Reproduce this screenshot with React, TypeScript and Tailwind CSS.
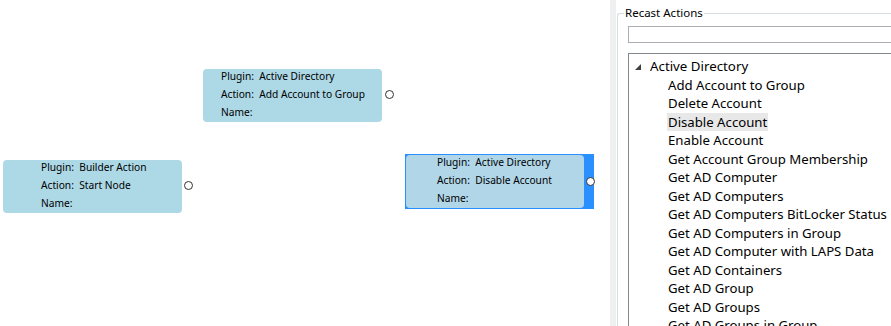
import React from "react";

const items = [
  "Add Account to Group",
  "Delete Account",
  "Disable Account",
  "Enable Account",
  "Get Account Group Membership",
  "Get AD Computer",
  "Get AD Computers",
  "Get AD Computers BitLocker Status",
  "Get AD Computers in Group",
  "Get AD Computer with LAPS Data",
  "Get AD Containers",
  "Get AD Group",
  "Get AD Groups",
  "Get AD Groups in Group",
];

function Port({ className }: { className: string }) {
  return (
    <div
      className={`absolute h-[9px] w-[9px] rounded-full border-[1.5px] border-[#333] bg-white ${className}`}
    />
  );
}

function NodeText({ plugin, action }: { plugin: string; action: string }) {
  return (
    <div className="flex flex-col gap-[4px] text-[10.2px] leading-[14px] text-black whitespace-pre">
      <span>Plugin:  {plugin}</span>
      <span>Action:  {action}</span>
      <span>Name:</span>
    </div>
  );
}

export default function App() {
  return (
    <div
      className="flex h-[326px] w-[891px] overflow-hidden bg-white"
      style={{ fontFamily: '"Noto Sans", "Open Sans", sans-serif' }}
    >
      {/* Canvas */}
      <div className="relative h-full w-[610px] shrink-0 bg-white">
        <div className="absolute left-[3px] top-[160px] h-[53px] w-[179px] rounded-[4px] bg-[#add8e6] pl-[38px]">
          <NodeText plugin="Builder Action" action="Start Node" />
          <Port className="left-[181px] top-[21px]" />
        </div>

        <div className="absolute left-[203px] top-[69px] h-[53px] w-[179px] rounded-[4px] bg-[#add8e6] pl-[18px]">
          <NodeText plugin="Active Directory" action="Add Account to Group" />
          <Port className="left-[182px] top-[21px]" />
        </div>

        <div className="absolute left-[405px] top-[154px] h-[55px] w-[189px] bg-[#2b90ff]">
          <div className="ml-[1px] mt-[1px] h-[53px] w-[178px] rounded-[4px] bg-[#b0d6e8] pl-[31px]">
            <NodeText plugin="Active Directory" action="Disable Account" />
          </div>
          <Port className="left-[181px] top-[23px]" />
        </div>
      </div>

      {/* Splitter */}
      <div className="h-full w-[6px] shrink-0 bg-[#f0f0f0]" />

      {/* Recast Actions panel */}
      <div className="relative h-full flex-1 overflow-hidden pl-[1px] pt-[13px]">
        <div className="h-[400px] w-[320px] rounded-tl-[3px] border-l border-t border-[#d5dfe5] pl-[10px] pt-[12px]">
          <div className="h-[17px] w-[300px] border border-[#abadb3] bg-white" />
          <div className="mt-[10px] h-[300px] w-[300px] border-l border-t border-[#828790] pt-[3px]">
            <div className="flex h-[18.5px] items-center">
              <span className="ml-[6px] mr-[9px] mt-[2px] h-0 w-0 border-b-[6px] border-l-[6px] border-b-[#404040] border-l-transparent" />
              <span className="text-[13.3px] leading-[18.5px] text-black">Active Directory</span>
            </div>
            {items.map((item) => (
              <div key={item} className="flex h-[18.5px] items-center pl-[38px]">
                <span
                  className={`px-[1px] text-[13.2px] leading-[18.5px] text-black whitespace-nowrap ${
                    item === "Disable Account" ? "bg-[#e8e8e8]" : ""
                  }`}
                >
                  {item}
                </span>
              </div>
            ))}
          </div>
        </div>
        <span className="absolute left-[8px] top-[5px] bg-white px-[1px] text-[11.5px] leading-[15px] text-black">
          Recast Actions
        </span>
      </div>
    </div>
  );
}
